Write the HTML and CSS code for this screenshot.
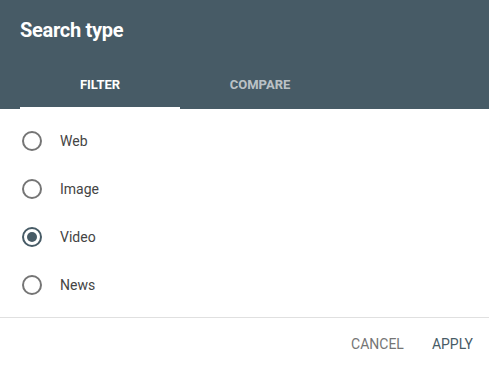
FILE: index.html
```html
<!DOCTYPE html>
<html lang="en">
<head>
    <meta charset="UTF-8">
    <meta name="viewport" content="width=device-width, initial-scale=1.0">
    <title>Search type</title>
    <link rel="stylesheet" href="styles.css">
</head>
<body>
    <!-- dialog -->
    <div class="dialog">
        <div class="header">
            <h2 class="title">Search type</h2>
            <div class="tabs">
                <div class="tab active">FILTER</div>
                <div class="tab">COMPARE</div>
            </div>
        </div>

        <div class="options">
            <label class="option"><span class="radio"></span>Web</label>
            <label class="option"><span class="radio"></span>Image</label>
            <label class="option"><span class="radio checked"></span>Video</label>
            <label class="option"><span class="radio"></span>News</label>
        </div>

        <div class="actions">
            <button class="btn cancel">CANCEL</button>
            <button class="btn apply">APPLY</button>
        </div>
    </div>
</body>
</html>
```

FILE: styles.css
```css
body {
    margin: 0;
    font-family: Roboto, 'Liberation Sans', sans-serif;
    background-color: white;
}

.dialog {
    width: 489px;
    height: 365px;
    display: flex;
    flex-direction: column;
}

.header {
    background-color: #475b66;
    padding: 0 20px;
}

.title {
    margin: 0;
    height: 60px;
    display: flex;
    align-items: center;
    color: white;
    font-size: 20px;
    font-weight: 700;
    letter-spacing: -0.3px;
    padding-bottom: 1px;
    box-sizing: border-box;
}

.tabs {
    display: flex;
    height: 49px;
}

.tab {
    width: 160px;
    display: flex;
    justify-content: center;
    align-items: center;
    font-size: 13px;
    font-weight: 700;
    color: rgba(255, 255, 255, 0.65);
    box-sizing: border-box;
    border-bottom: 2px solid transparent;
    padding-top: 1px;
}

.tab.active {
    color: white;
    border-bottom-color: white;
}

.options {
    padding: 8px 0;
    border-bottom: 1px solid #e0e0e0;
}

.option {
    height: 48px;
    display: flex;
    align-items: center;
    padding-left: 22px;
    font-size: 14px;
    color: #444;
}

.radio {
    width: 20px;
    height: 20px;
    box-sizing: border-box;
    border: 2px solid #757575;
    border-radius: 50%;
    margin-right: 18px;
    display: flex;
    justify-content: center;
    align-items: center;
}

.radio.checked {
    border-color: #475b66;
}

.radio.checked::after {
    content: '';
    width: 10px;
    height: 10px;
    border-radius: 50%;
    background-color: #475b66;
}

.actions {
    flex: 1;
    display: flex;
    justify-content: flex-end;
    align-items: center;
    gap: 12px;
    padding: 4px 8px 0 0;
}

.btn {
    font-family: Roboto, 'Liberation Sans', sans-serif;
    font-size: 14px;
    background: none;
    border: none;
    padding: 8px 8px;
    cursor: pointer;
}

.cancel {
    color: #757575;
}

.apply {
    color: #475b66;
}
```
